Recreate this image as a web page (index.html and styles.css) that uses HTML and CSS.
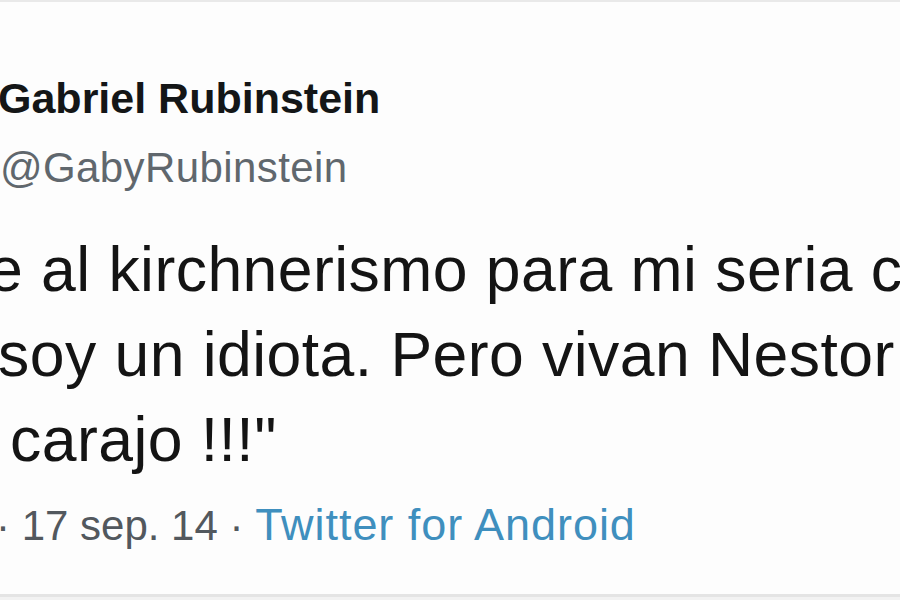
FILE: index.html
```html
<!DOCTYPE html>
<html lang="es">
<head>
<meta charset="utf-8">
<title>Gabriel Rubinstein</title>
<link rel="stylesheet" href="styles.css">
</head>
<body>
<main class="tweet">
  <header class="author">
    <div class="name">Gabriel Rubinstein</div>
    <div class="handle">@GabyRubinstein</div>
  </header>
  <div class="text">
    <div class="line line-1">e al kirchnerismo para mi seria como</div>
    <div class="line line-2">soy un idiota. Pero vivan Nestor</div>
    <div class="line line-3">carajo !!!"</div>
  </div>
  <div class="meta">
    <span class="date">· 17 sep. 14 · </span><span class="source">Twitter for Android</span>
  </div>
</main>
</body>
</html>
```
FILE: styles.css
```css
html, body {
  margin: 0;
  padding: 0;
  width: 900px;
  height: 600px;
  overflow: hidden;
  background: #f2f2f2;
}

.tweet {
  box-sizing: border-box;
  width: 900px;
  height: 597px;
  background: #fdfdfd;
  border-top: 2px solid #e9e9e9;
  border-bottom: 3px solid #e4e4e4;
  overflow: hidden;
  padding-top: 71px;
  font-family: "Liberation Sans", Arial, sans-serif;
  display: flex;
  flex-direction: column;
}

.author {
  display: flex;
  flex-direction: column;
  gap: 20px;
}

.name {
  font-size: 43px;
  line-height: 50px;
  font-weight: 700;
  color: #141617;
  margin-left: -2px;
  white-space: nowrap;
}

.handle {
  font-size: 42px;
  line-height: 50px;
  letter-spacing: 0.4px;
  color: #60676d;
  white-space: nowrap;
}

.text {
  margin-top: 34px;
  font-size: 62.5px;
  line-height: 85px;
  letter-spacing: 0.45px;
  color: #141414;
}

.line {
  white-space: nowrap;
}

.line-1 { margin-left: -12px; }
.line-2 { margin-left: -2px; }
.line-3 { margin-left: 10px; }

.meta {
  margin-top: 18px;
  margin-left: -4px;
  font-size: 42px;
  line-height: 50px;
  white-space: nowrap;
}

.date {
  color: #52585e;
}

.source {
  font-size: 45px;
  letter-spacing: 0.95px;
  color: #3f8fbe;
}
```
